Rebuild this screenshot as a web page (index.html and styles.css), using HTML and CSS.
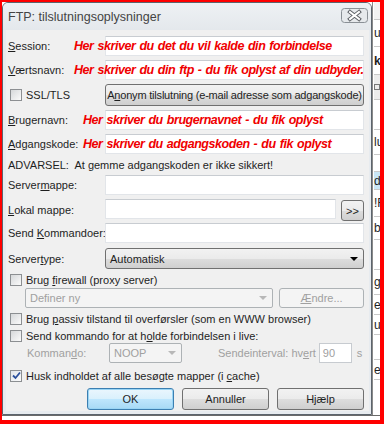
FILE: index.html
```html
<!DOCTYPE html>
<html lang="da">
<head>
    <meta charset="UTF-8">
    <title>FTP: tilslutningsoplysninger</title>
    <link rel="stylesheet" href="styles.css">
</head>
<body>
<div id="screen">
    <div id="dialog">
        <div class="titlebar">
            <span class="title">FTP: tilslutningsoplysninger</span>
            <span class="close">
                <svg width="27" height="15" viewBox="0 0 27 15">
                    <rect x="0.5" y="0.5" width="26" height="14" rx="3" fill="#e6e9ec" stroke="#8a9096"/>
                    <path d="M9 4 L18 11 M18 4 L9 11" stroke="#5d6166" stroke-width="4" stroke-linecap="square"/>
                    <path d="M9 4 L18 11 M18 4 L9 11" stroke="#ffffff" stroke-width="2" stroke-linecap="square"/>
                </svg>
            </span>
        </div>
        <div class="client">
            <div class="row r-session">
                <label><u>S</u>ession:</label>
                <div class="input"></div>
                <span class="note note-a">Her skriver du det du vil kalde din forbindelse</span>
            </div>
            <div class="row r-host">
                <label><u>V</u>ærtsnavn:</label>
                <div class="input"></div>
                <span class="note note-a">Her skriver du din ftp - du fik oplyst af din udbyder.</span>
            </div>
            <div class="row r-ssl">
                <label class="check"><span class="box"></span><span>SSL/TLS</span></label>
                <div class="btn btn-wide"><span>A<u>n</u>onym tilslutning (e-mail adresse som adgangskode)</span></div>
            </div>
            <div class="row r-user">
                <label><u>B</u>rugernavn:</label>
                <div class="input"></div>
                <span class="note note-b">Her skriver du brugernavnet - du fik oplyst</span>
            </div>
            <div class="row r-pass">
                <label><u>A</u>dgangskode:</label>
                <div class="input"></div>
                <span class="note note-b">Her skriver du adgangskoden - du fik oplyst</span>
            </div>
            <div class="line r-warn">ADVARSEL:&nbsp; At gemme adgangskoden er ikke sikkert!</div>
            <div class="row r-dir">
                <label>Server<u>m</u>appe:</label>
                <div class="input"></div>
            </div>
            <div class="row r-local">
                <label><u>L</u>okal mappe:</label>
                <div class="pair">
                    <div class="input"></div>
                    <div class="btn btn-browse">&gt;&gt;</div>
                </div>
            </div>
            <div class="row r-cmd">
                <label>Send <u>K</u>ommandoer:</label>
                <div class="input"></div>
            </div>
            <div class="row r-type">
                <label>Server<u>t</u>ype:</label>
                <div class="select"><span>Automatisk</span><span class="arrow"></span></div>
            </div>
            <div class="line r-fw">
                <label class="check"><span class="box"></span><span>Brug <u>f</u>irewall (proxy server)</span></label>
            </div>
            <div class="proxy r-proxy">
                <div class="select off"><span>Definer ny</span><span class="arrow"></span></div>
                <div class="btn off btn-edit"><span><u>Æ</u>ndre...</span></div>
            </div>
            <div class="line r-pasv">
                <label class="check"><span class="box"></span><span>Brug <u>p</u>assiv tilstand til overførsler (som en WWW browser)</span></label>
            </div>
            <div class="line r-keep">
                <label class="check"><span class="box"></span><span>Send kommando for at h<u>o</u>lde forbindelsen i live:</span></label>
            </div>
            <div class="keep r-keepopts">
                <span class="dim kw-label">Komman<u>d</u>o:</span>
                <div class="select off small"><span>NOOP</span><span class="arrow"></span></div>
                <span class="dim kw-int">Sendeinterval: hv<u>e</u>rt</span>
                <div class="input off num">90</div>
                <span class="dim">s</span>
            </div>
            <div class="line r-cache">
                <label class="check"><span class="box on">
                    <svg width="9" height="9" viewBox="0 0 9 9"><path d="M1 4.5 L3.5 7 L8 1.5" fill="none" stroke="#2a4f9c" stroke-width="1.8"/></svg>
                </span><span>Husk indholdet af alle besøgte mapper (i <u>c</u>ache)</span></label>
            </div>
            <div class="buttons">
                <div class="btn btn-ok">OK</div>
                <div class="btn">Annuller</div>
                <div class="btn">Hjælp</div>
            </div>
        </div>
    </div>
    <div id="behind">
        <div class="cell c-top"></div>
        <div class="cell c1">u</div>
        <div class="cell c2">k</div>
        <div class="cell c3"><span class="mini"></span></div>
        <div class="cell c4"></div>
        <div class="cell c5">lu</div>
        <div class="cell c6"></div>
        <div class="cell c7">d</div>
        <div class="cell c8">!F</div>
        <div class="cell c9">bi</div>
        <div class="cell c10"></div>
        <div class="cell c11">ge</div>
        <div class="cell c12">et</div>
        <div class="cell c13">ull</div>
        <div class="cell c14"></div>
        <div class="cell c15">elp</div>
        <div class="cell c16"></div>
    </div>
    <div id="below"></div>
</div>
</body>
</html>
```

FILE: styles.css
```css
*{
    margin:0;
    padding:0;
    box-sizing:border-box;
}
body{
    font-family:"Liberation Sans", Arial, sans-serif;
    font-size:11px;
    color:#1e1e1e;
    background:#fff;
}
#screen{
    width:384px;
    height:424px;
    border-style:solid;
    border-color:#ff0000;
    border-width:2px 4px 4px 2px;
    display:grid;
    grid-template-columns:370px 8px;
    grid-template-rows:413px 5px;
    background:#fff;
    overflow:hidden;
}
#dialog{
    border:1px solid #5c646d;
    border-radius:6px 6px 0 0;
    background:#e7ebef;
    display:flex;
    flex-direction:column;
    overflow:hidden;
}
.titlebar{
    height:27px;
    display:flex;
    align-items:center;
    justify-content:space-between;
    padding:0 3px 0 5px;
    background:linear-gradient(#eef1f4, #e4e8ec);
}
.title{
    font-size:12.5px;
    color:#444;
}
.close{
    display:flex;
    margin-top:-3px;
}
.client{
    flex:1;
    margin:0 2px 3px 3px;
    background:#f0f0f0;
    padding:6px 5px 0 2px;
    display:flex;
    flex-direction:column;
}
.row{
    display:grid;
    grid-template-columns:97px 1fr;
    align-items:center;
    height:20px;
}
.row > *{
    grid-row:1;
}
.row > label{
    grid-column:1;
    white-space:nowrap;
}
.row > .input, .row > .btn, .row > .select, .row > .pair{
    grid-column:2;
    height:100%;
}
.input{
    background:#fff;
    border:1px solid #e2e5e9;
    border-top-color:#c8ccd1;
}
.note{
    grid-column:1 / -1;
    color:#f00000;
    font-weight:bold;
    font-style:italic;
    font-size:12.5px;
    letter-spacing:-0.45px;
    word-spacing:1px;
    white-space:nowrap;
    pointer-events:none;
}
.note-a{ margin-left:66px; }
.note-b{ margin-left:75px; }
.line{
    display:flex;
    align-items:center;
    height:15px;
    white-space:nowrap;
}
.check{
    display:flex;
    align-items:center;
    white-space:nowrap;
    margin-left:2px;
}
.box{
    width:12px;
    height:12px;
    margin-right:4px;
    border:1px solid #8c8f92;
    background:linear-gradient(135deg, #d6d8da, #fbfbfb);
    display:flex;
    align-items:center;
    justify-content:center;
}
.box.on{
    background:linear-gradient(135deg, #dfe4ea, #fbfbfb);
}
.btn{
    display:flex;
    align-items:center;
    justify-content:center;
    border:1px solid #707070;
    border-radius:3px;
    background:linear-gradient(#f2f2f2 0%, #ebebeb 50%, #dddddd 51%, #cfcfcf 100%);
    white-space:nowrap;
}
.btn-wide{
    letter-spacing:-0.2px;
    overflow:hidden;
}
.btn.off{
    border-color:#adb2b5;
    background:#f4f4f4;
    color:#a0a0a0;
}
.pair{
    display:flex;
    gap:5px;
}
.pair .input{
    flex:1;
}
.btn-browse{
    width:23px;
    height:21px;
    margin-top:1px;
}
.select{
    display:flex;
    align-items:center;
    padding-left:4px;
    border:1px solid #707070;
    border-radius:3px;
    background:linear-gradient(#f2f2f2 0%, #ebebeb 50%, #dddddd 51%, #cfcfcf 100%);
    white-space:nowrap;
}
.select.off{
    border-color:#adb2b5;
    background:#f4f4f4;
    color:#a0a0a0;
    border-radius:2px;
}
.arrow{
    margin-left:auto;
    margin-right:5px;
    width:0;
    height:0;
    border-left:4px solid transparent;
    border-right:4px solid transparent;
    border-top:4px solid #000;
}
.select.off .arrow{
    border-top-color:#b8b8b8;
}
.r-session{ margin-top:0; }
.r-host{ margin-top:4px; }
.r-ssl{ margin-top:4px; height:22px; }
.r-user{ margin-top:4px; }
.r-pass{ margin-top:4px; }
.r-warn{ margin-top:3px; height:16px; }
.r-dir{ margin-top:2px; }
.r-local{ margin-top:4px; height:21px; }
.r-local .input{ height:20px; }
.r-cmd{ margin-top:3px; }
.r-type{ margin-top:5px; height:21px; }
.r-fw{ margin-top:3px; }
.r-proxy{ margin-top:1px; }
.r-pasv{ margin-top:3px; }
.r-keep{ margin-top:3px; height:14px; }
.r-keepopts{ margin-top:0; }
.r-cache{ margin-top:5px; }
.proxy{
    display:flex;
    height:20px;
    padding-left:17px;
    gap:6px;
}
.proxy .select{
    width:248px;
}
.btn-edit{
    flex:1;
}
.keep{
    display:flex;
    align-items:center;
    height:20px;
    white-space:nowrap;
}
.dim{
    color:#a0a0a0;
}
.kw-label{
    margin-left:19px;
    width:82px;
}
.select.small{
    width:73px;
    height:20px;
}
.kw-int{
    margin-left:36px;
    margin-right:3px;
}
.input.num{
    width:33px;
    height:20px;
    padding-left:3px;
    display:flex;
    align-items:center;
    border-color:#c7cbd0;
    color:#a0a0a0;
    margin-right:5px;
}
.buttons{
    display:flex;
    justify-content:flex-end;
    gap:8px;
    margin-top:5px;
}
.buttons .btn{
    width:87px;
    height:22px;
}
.btn-ok{
    border-color:#3c7fb1;
    background:linear-gradient(#eaf6fd 0%, #d9f0fc 50%, #bee6fd 51%, #a7d9f5 100%);
    box-shadow:inset 0 0 0 1px #9ad5f5;
}
#behind{
    display:flex;
    flex-direction:column;
    background:#fff;
    border-left:1px solid #8a8a8a;
    font-size:12px;
    overflow:hidden;
    padding-left:1px;
}
.cell{
    border-bottom:1px solid #c9c9c9;
    display:flex;
    align-items:center;
    white-space:nowrap;
    overflow:hidden;
}
.c-top{ height:18px; background:#f2f2f2; }
.c1{ height:27px; }
.c2{ height:28px; font-weight:bold; }
.c3{ height:25px; background:#ececec; }
.mini{ width:6px; height:6px; border:1px solid #777; }
.c4{ height:30px; }
.c5{ height:25px; }
.c6{ height:17px; }
.c7{ height:18px; background:#c9e6f6; }
.c8{ height:27px; }
.c9{ height:23px; }
.c10{ height:30px; }
.c11{ height:25px; }
.c12{ height:20px; }
.c13{ height:20px; }
.c14{ height:25px; }
.c15{ height:20px; }
.c16{ flex:1; border-bottom:0; }
#below{
    grid-column:1 / -1;
    background:#fff;
    border-top:1px solid #6a6a6a;
}
```
